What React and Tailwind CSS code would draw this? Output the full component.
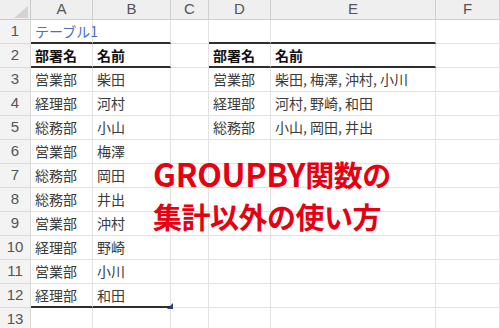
import React from "react";

const cols = ["A", "B", "C", "D", "E", "F"];

// sheet contents keyed by column letter, rows 1..13
const rows = [
  { A: "テーブル1" },
  { A: "部署名", B: "名前", D: "部署名", E: "名前" },
  { A: "営業部", B: "柴田", D: "営業部", E: "柴田, 梅澤, 沖村, 小川" },
  { A: "経理部", B: "河村", D: "経理部", E: "河村, 野崎, 和田" },
  { A: "総務部", B: "小山", D: "総務部", E: "小山, 岡田, 井出" },
  { A: "営業部", B: "梅澤" },
  { A: "総務部", B: "岡田" },
  { A: "総務部", B: "井出" },
  { A: "営業部", B: "沖村" },
  { A: "経理部", B: "野崎" },
  { A: "営業部", B: "小川" },
  { A: "経理部", B: "和田" },
  {},
];

const font = { fontFamily: '"Noto Sans CJK JP", "Noto Sans", sans-serif' };

function cellClass(r, c) {
  let cls = "box-border h-[24px] border-r border-[#e2e2e2] pl-[4px] flex items-center whitespace-nowrap overflow-visible text-[14px] text-[#3a3a3a]";
  const inTableA = c === "A" || c === "B";
  const inTableD = c === "D" || c === "E";
  const thick = (r === 1 && (inTableA || inTableD)) || (r === 2 && (inTableA || inTableD)) || (r === 12 && inTableA);
  cls += thick ? " border-b-2 border-b-[#2e2e2e]" : " border-b";
  if (r === 2 && (inTableA || inTableD)) cls += " font-bold text-[#111]";
  if (r === 1 && c === "A") cls += " text-[12px] text-[#4a6ec0]";
  return cls;
}

export default function App() {
  return (
    <div className="relative w-[500px] h-[328px] overflow-hidden bg-white" style={font}>
      <div className="grid grid-cols-[31px_62px_78px_38px_62px_165px_1fr] grid-rows-[20px] auto-rows-[24px]">
        {/* corner */}
        <div className="relative bg-[#efefef] border-r border-b border-[#c8c8c8]">
          <svg className="absolute left-[14px] top-[6px]" width="14" height="12" viewBox="0 0 14 12">
            <polygon points="14,0 14,12 0,12" fill="#d3d3d3" />
          </svg>
        </div>
        {cols.map((c) => (
          <div
            key={c}
            className="bg-[#efefef] border-r border-b border-[#cfcfcf] flex items-center justify-center text-[15px] text-[#555]"
            style={{ fontFamily: '"Liberation Sans", sans-serif' }}
          >
            {c}
          </div>
        ))}

        {rows.map((row, i) => {
          const r = i + 1;
          return (
            <React.Fragment key={r}>
              <div
                className="box-border h-[24px] bg-[#f3f3f3] border-r border-b border-[#dadada] flex items-center justify-center text-[15px] text-[#555]"
                style={{ fontFamily: '"Liberation Sans", sans-serif' }}
              >
                {r}
              </div>
              {cols.map((c) => (
                <div key={c} className={cellClass(r, c)}>
                  {row[c] || ""}
                </div>
              ))}
            </React.Fragment>
          );
        })}
      </div>

      {/* table resize handle */}
      <svg className="absolute left-[167px] top-[303px]" width="6" height="6" viewBox="0 0 6 6">
        <polygon points="6,0 6,6 0,6" fill="#2d3f7a" />
      </svg>

      {/* title text box */}
      <div className="absolute left-[153px] top-[152px] text-[#e60012] font-bold text-[29px] leading-[42px] tracking-[-0.5px]">
        <div>
          <span className="text-[32px] tracking-[-0.3px]">GROUPBY</span>関数の
        </div>
        <div>集計以外の使い方</div>
      </div>
    </div>
  );
}
